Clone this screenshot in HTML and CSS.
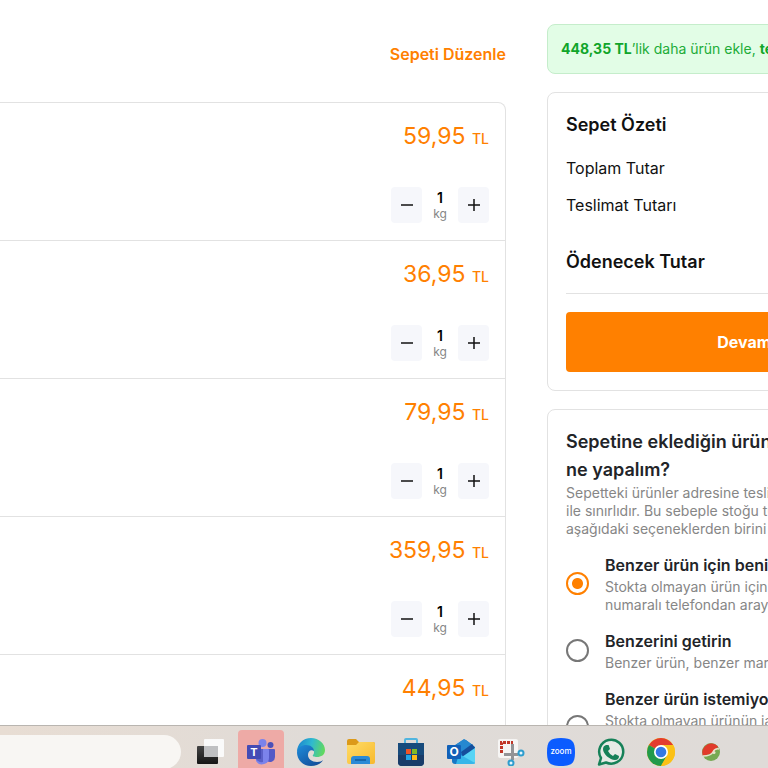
FILE: index.html
```html
<!DOCTYPE html>
<html lang="tr">
<head>
  <meta charset="UTF-8">
  <meta name="viewport" content="width=device-width, initial-scale=1.0">
  <title>Sepetim</title>
  <link rel="stylesheet" href="styles.css">
</head>
<body>
  <main class="page">
    <section class="cart">
      <div class="cart-header">
        <a href="#" class="edit-link">Sepeti Düzenle</a>
      </div>

      <ul class="cart-list">
        <li class="cart-item">
          <p class="price">59,95 <span class="currency">TL</span></p>
          <div class="quantity">
            <button class="quantity-button" aria-label="Azalt"><svg width="12" height="12" viewBox="0 0 12 12"><path d="M0 6h12"/></svg></button>
            <div class="amount"><output>1</output><span class="unit">kg</span></div>
            <button class="quantity-button" aria-label="Artır"><svg width="12" height="12" viewBox="0 0 12 12"><path d="M0 6h12M6 0v12"/></svg></button>
          </div>
        </li>
        <li class="cart-item">
          <p class="price">36,95 <span class="currency">TL</span></p>
          <div class="quantity">
            <button class="quantity-button" aria-label="Azalt"><svg width="12" height="12" viewBox="0 0 12 12"><path d="M0 6h12"/></svg></button>
            <div class="amount"><output>1</output><span class="unit">kg</span></div>
            <button class="quantity-button" aria-label="Artır"><svg width="12" height="12" viewBox="0 0 12 12"><path d="M0 6h12M6 0v12"/></svg></button>
          </div>
        </li>
        <li class="cart-item">
          <p class="price">79,95 <span class="currency">TL</span></p>
          <div class="quantity">
            <button class="quantity-button" aria-label="Azalt"><svg width="12" height="12" viewBox="0 0 12 12"><path d="M0 6h12"/></svg></button>
            <div class="amount"><output>1</output><span class="unit">kg</span></div>
            <button class="quantity-button" aria-label="Artır"><svg width="12" height="12" viewBox="0 0 12 12"><path d="M0 6h12M6 0v12"/></svg></button>
          </div>
        </li>
        <li class="cart-item">
          <p class="price">359,95 <span class="currency">TL</span></p>
          <div class="quantity">
            <button class="quantity-button" aria-label="Azalt"><svg width="12" height="12" viewBox="0 0 12 12"><path d="M0 6h12"/></svg></button>
            <div class="amount"><output>1</output><span class="unit">kg</span></div>
            <button class="quantity-button" aria-label="Artır"><svg width="12" height="12" viewBox="0 0 12 12"><path d="M0 6h12M6 0v12"/></svg></button>
          </div>
        </li>
        <li class="cart-item">
          <p class="price">44,95 <span class="currency">TL</span></p>
        </li>
      </ul>
    </section>

    <aside class="sidebar">
      <div class="promo"><b>448,35 TL</b>’lik daha ürün ekle, <b>teslimat</b></div>

      <section class="box summary">
        <h2>Sepet Özeti</h2>
        <p>Toplam Tutar</p>
        <p>Teslimat Tutarı</p>
        <h2 class="total">Ödenecek Tutar</h2>
        <button class="checkout-button">Devam Et</button>
      </section>

      <section class="box">
        <h2 class="question">Sepetine eklediğin ürün<br>ne yapalım?</h2>
        <p class="hint">Sepetteki ürünler adresine teslimat<br>ile sınırlıdır. Bu sebeple stoğu tükenen<br>aşağıdaki seçeneklerden birini seç</p>

        <label class="option">
          <input type="radio" name="stok" checked>
          <span class="option-text">
            <strong>Benzer ürün için beni ara</strong>
            <span class="hint">Stokta olmayan ürün için seni<br>numaralı telefondan arayalım</span>
          </span>
        </label>
        <label class="option">
          <input type="radio" name="stok">
          <span class="option-text">
            <strong>Benzerini getirin</strong>
            <span class="hint">Benzer ürün, benzer marka</span>
          </span>
        </label>
        <label class="option">
          <input type="radio" name="stok">
          <span class="option-text">
            <strong>Benzer ürün istemiyorum</strong>
            <span class="hint">Stokta olmayan ürünün iadesi<br>ödeme yaptığın karta<br>yapılsın</span>
          </span>
        </label>
      </section>
    </aside>
  </main>

  <footer class="taskbar">
    <input class="taskbar-search" type="search" aria-label="Ara">
    <nav class="apps">
      <button class="app" aria-label="Görev görünümü">
        <svg width="28" height="28" viewBox="0 0 28 28">
          <defs>
            <linearGradient id="dark" x2="0" y2="1"><stop stop-color="#444"/><stop offset="1" stop-color="#151515"/></linearGradient>
          </defs>
          <rect x="7" y="1" width="20" height="18" rx="1" fill="#fafafa"/>
          <rect y="8" width="21" height="18" rx="1" fill="url(#dark)"/>
          <path d="M7 8h14v11H7z" fill="#bfc0c2"/>
        </svg>
      </button>
      <button class="app active" aria-label="Teams">
        <svg width="28" height="28" viewBox="0 0 28 28">
          <circle cx="23.500" cy="7" r="3" fill="#4b50b8"/>
          <path d="M18 11h9q1 0 1 1v7a5 5 0 0 1-8 4z" fill="#5459c6"/>
          <circle cx="15.500" cy="5" r="4" fill="#7b83eb"/>
          <path d="M9 11h12q1 0 1 1v7a7 7 0 0 1-13 4z" fill="#7b83eb"/>
          <path d="M9 11h7v13a7 7 0 0 1-7-3z" fill="#5a60c8"/>
          <rect y="7" width="14" height="14" rx="1" fill="#444bb5"/>
          <text x="7" y="18" text-anchor="middle" font-size="11" font-weight="700" fill="#fff">T</text>
        </svg>
      </button>
      <button class="app" aria-label="Edge">
        <svg width="28" height="28" viewBox="0 0 28 28">
          <defs>
            <linearGradient id="edge-top" x1="0" y1="0.300" x2="1" y2="0.500"><stop stop-color="#1c86cf"/><stop offset="0.500" stop-color="#2fb9d0"/><stop offset="1" stop-color="#62d95e"/></linearGradient>
            <linearGradient id="edge-low" x1="0" y1="0" x2="0.800" y2="1"><stop stop-color="#1f8ddb"/><stop offset="1" stop-color="#124c98"/></linearGradient>
          </defs>
          <path d="M0 14C0 6 6 0 14 0s14 6 14 12c0 5-4 7-8 7-3 0-5-1-4-2 2-2 1-5-1-6C11 8 3 9 0 14z" fill="url(#edge-top)"/>
          <path d="M0 14c1-5 5-7 9-7 5 0 8 3 8 6-3-2-6 0-6 4 0 4 4 7 9 7 3 0 5-1 6-2-2 4-7 6-12 6C6 28 0 22 0 14z" fill="url(#edge-low)"/>
        </svg>
      </button>
      <button class="app" aria-label="Dosya Gezgini">
        <svg width="28" height="28" viewBox="0 0 28 28">
          <defs><linearGradient id="folder" x2="1" y2="1"><stop stop-color="#ffdc68"/><stop offset="1" stop-color="#f7b92d"/></linearGradient></defs>
          <path d="M0 3q0-2 2-2h7l3 3h14q2 0 2 2v8H0z" fill="#dc9a1a"/>
          <path d="M0 7h9l3-3h14q2 0 2 2v18q0 2-2 2H2q-2 0-2-2z" fill="url(#folder)"/>
          <path d="M4 26v-5q0-3 3-3h13q3 0 3 3v5z" fill="#2a8ad6"/>
          <path d="M8 22h11" stroke="#125b9c" stroke-width="1.500"/>
        </svg>
      </button>
      <button class="app" aria-label="Microsoft Store">
        <svg width="28" height="28" viewBox="0 0 28 28">
          <path d="M8 6V2q0-1 1-1h10q1 0 1 1v4" fill="none" stroke="#51b5df" stroke-width="2"/>
          <path d="M1 5h26v19q0 4-4 4H5q-4 0-4-4z" fill="#174b7c"/>
          <path d="M1 17h26v7q0 4-4 4H5q-4 0-4-4z" fill="#193c69"/>
          <path d="M9 11h5v5H9z" fill="#f05326"/>
          <path d="M15 11h5v5h-5z" fill="#80bb25"/>
          <path d="M9 17h5v5H9z" fill="#20a5e7"/>
          <path d="M15 17h5v5h-5z" fill="#fcba18"/>
        </svg>
      </button>
      <button class="app" aria-label="Outlook">
        <svg width="28" height="28" viewBox="0 0 28 28">
          <path d="M5 9 16 2q1-1 3 0l9 7v15q0 2-2 2H8q-3 0-3-3z" fill="#1677c5"/>
          <path d="M7 8 17 1l9 6-12 9z" fill="#2588d0"/>
          <path d="m14 14 11-8 3 4-12 9z" fill="#154f9c"/>
          <path d="m28 10-16 11v5h14q2 0 2-2z" fill="#56d4f5"/>
          <path d="m12 16 16 9q-1 1-3 1H9z" fill="#35b6e9"/>
          <rect y="7" width="14" height="14" rx="1" fill="#1160b7"/>
          <text x="7" y="18" text-anchor="middle" font-size="12" font-weight="700" fill="#fff">O</text>
        </svg>
      </button>
      <button class="app" aria-label="Ekran Alıntısı">
        <svg width="28" height="28" viewBox="0 0 28 28">
          <rect x="1" y="1" width="20" height="19" rx="2" fill="#f6f5f4"/>
          <path d="M4.500 15V4.500H16" fill="none" stroke="#c13628" stroke-width="3" stroke-dasharray="3 1"/>
          <path d="M15.500 6v16M7 16.500h14" fill="none" stroke="#929396" stroke-width="3"/>
          <circle cx="24" cy="15" r="2.500" fill="#e8f5fb" stroke="#2d9dce" stroke-width="2"/>
          <circle cx="14" cy="25" r="2.500" fill="#e8f5fb" stroke="#2d9dce" stroke-width="2"/>
        </svg>
      </button>
      <button class="app" aria-label="Zoom">
        <svg width="28" height="28" viewBox="0 0 28 28">
          <path d="M14 0c11 0 14 3 14 14s-3 14-14 14S0 25 0 14 3 0 14 0z" fill="#0b5cff"/>
          <text x="14" y="16" text-anchor="middle" font-size="8" font-weight="500" fill="#fff">zoom</text>
        </svg>
      </button>
      <button class="app" aria-label="WhatsApp">
        <svg width="28" height="28" viewBox="0 0 28 28">
          <path d="M2 26.500 4 20A12 12 0 1 1 9 24.500z" fill="#e7ebe6" stroke="#168158" stroke-width="2.500" stroke-linejoin="round"/>
          <path d="M9 7h2q1 0 1 1l1 3-2 2q2 4 5 5l2-2 4 2q0 4-4 4c-5 0-12-6-12-11q0-3 3-4z" fill="#168158"/>
        </svg>
      </button>
      <button class="app" aria-label="Chrome">
        <svg width="28" height="28" viewBox="0 0 28 28">
          <circle cx="14" cy="14" r="14" fill="#fbc116"/>
          <path d="M14 14 1.900 7a14 14 0 0 1 24.200 0z" fill="#e33b2e"/>
          <path d="M14 14 1.900 7A14 14 0 0 0 14 28l6-10.500z" fill="#219a4b"/>
          <path d="M14 7h12.100A14 14 0 0 1 14 28l6-10.500z" fill="#fbc116"/>
          <circle cx="14" cy="14" r="7" fill="#fff"/>
          <circle cx="14" cy="14" r="5.300" fill="#3478e5"/>
        </svg>
      </button>
      <button class="app" aria-label="Tarayıcı uygulaması">
        <svg width="18" height="18" viewBox="0 0 18 18">
          <circle cx="9" cy="9" r="9" fill="#76a953"/>
          <path d="M1 13A9 9 0 0 1 16 3.500Q14 8 8 11z" fill="#e13b2b"/>
          <path d="M1 13q8 0 10-4t6-3" fill="none" stroke="#e8e3cb" stroke-width="1.500"/>
          <circle cx="12" cy="9.500" r="1.500" fill="#e8e3cb"/>
        </svg>
      </button>
    </nav>
  </footer>
</body>
</html>
```

FILE: styles.css
```css
:root {
  --orange: #ff8000;
  --border: #e2e2e2;
  --muted: #868686;
  --radius: 8px;
}

* {
  box-sizing: border-box;
}

body {
  margin: 0;
  height: 100vh;
  display: flex;
  flex-direction: column;
  overflow: hidden;
  font-family: Inter, "Liberation Sans", sans-serif;
  font-size: 16px;
  line-height: 24px;
  color: #111;
  background: #fff;
}

h2,
p,
ul {
  margin: 0;
  padding: 0;
}

button {
  border: none;
  padding: 0;
  font-family: inherit;
  cursor: pointer;
}

.page {
  flex: 1;
  min-height: 0;
  display: grid;
  grid-template-columns: minmax(0, 1fr) 221px;
  gap: 41px;
  overflow: hidden;
}

/* cart */
.cart-header {
  display: flex;
  justify-content: flex-end;
  padding: 42px 0 36px;
}

.edit-link {
  color: var(--orange);
  font-weight: 600;
  text-decoration: none;
}

.cart-list {
  list-style: none;
  border: 1px solid var(--border);
  border-left: none;
  border-radius: 0 var(--radius) 0 0;
}

.cart-item {
  display: flex;
  flex-direction: column;
  align-items: flex-end;
  justify-content: space-between;
  min-height: 138px;
  padding: 16px 16px 17px;
  border-bottom: 1px solid var(--border);
}

.price {
  color: var(--orange);
  font-size: 23px;
  line-height: 34px;
}

.currency {
  font-size: 14px;
  font-weight: 500;
}

.quantity {
  display: flex;
}

.quantity-button {
  display: flex;
  align-items: center;
  justify-content: center;
  width: 31px;
  height: 36px;
  border-radius: 4px;
  background: #f6f7fb;
}

.quantity-button path {
  stroke: #111;
  stroke-width: 1.5;
}

.amount {
  display: flex;
  flex-direction: column;
  align-items: center;
  justify-content: center;
  width: 36px;
  color: #000;
  font-size: 14px;
  font-weight: 600;
  line-height: 18px;
}

.unit {
  color: var(--muted);
  font-size: 12px;
  font-weight: 400;
  line-height: 14px;
}

/* sidebar */
.sidebar {
  display: flex;
  flex-direction: column;
  gap: 18px;
  width: 414px;
  padding-top: 24px;
  white-space: nowrap;
}

.promo {
  padding: 12px 13px;
  border: 1px solid #c5edcb;
  border-radius: var(--radius);
  background: #e2fde6;
  color: #20ac38;
  font-size: 14px;
}

.promo b {
  color: #10a52a;
}

.box {
  padding: 18px;
  border: 1px solid var(--border);
  border-radius: var(--radius);
}

.box h2 {
  font-size: 18px;
  font-weight: 600;
  line-height: 28px;
}

.summary h2 {
  margin-bottom: 17px;
}

.summary p {
  margin-bottom: 13px;
}

.summary .total {
  margin: 31px 0 18px;
  padding-bottom: 17px;
  border-bottom: 1px solid var(--border);
}

.checkout-button {
  display: block;
  width: 100%;
  height: 60px;
  border-radius: 4px;
  background: var(--orange);
  color: #fff;
  font-size: 16px;
  font-weight: 700;
}

.box .question {
  color: #222428;
}

.hint {
  color: var(--muted);
  font-size: 14px;
  line-height: 18px;
}

.option {
  display: flex;
  align-items: center;
  gap: 16px;
  margin-top: 15px;
}

.option-text {
  display: flex;
  flex-direction: column;
  gap: 1px;
}

.option strong {
  color: #222428;
  font-weight: 600;
}

.option input {
  appearance: none;
  width: 23px;
  height: 23px;
  margin: 0;
  border: 2px solid #777;
  border-radius: 50%;
}

.option input:checked {
  border-color: var(--orange);
  background: radial-gradient(circle, var(--orange) 5px, #fff 6px);
}

/* taskbar */
.taskbar {
  display: flex;
  gap: 7px;
  height: 43px;
  border-top: 1px solid #b9b5b0;
  background: linear-gradient(90deg, #e8ddd3, #e0dbd7 40%, #dfdbd8);
}

.taskbar-search {
  width: 181px;
  height: 34px;
  margin: 9px 0 0;
  border: none;
  border-radius: 0 17px 17px 0;
  background: #f8f6f3;
}

.apps {
  display: flex;
  gap: 4px;
  padding-top: 4px;
}

.app {
  display: flex;
  align-items: center;
  justify-content: center;
  width: 46px;
  height: 44px;
  border-radius: 4px 4px 0 0;
  background: none;
}

.app.active {
  background: #eeaaa6;
}
```
